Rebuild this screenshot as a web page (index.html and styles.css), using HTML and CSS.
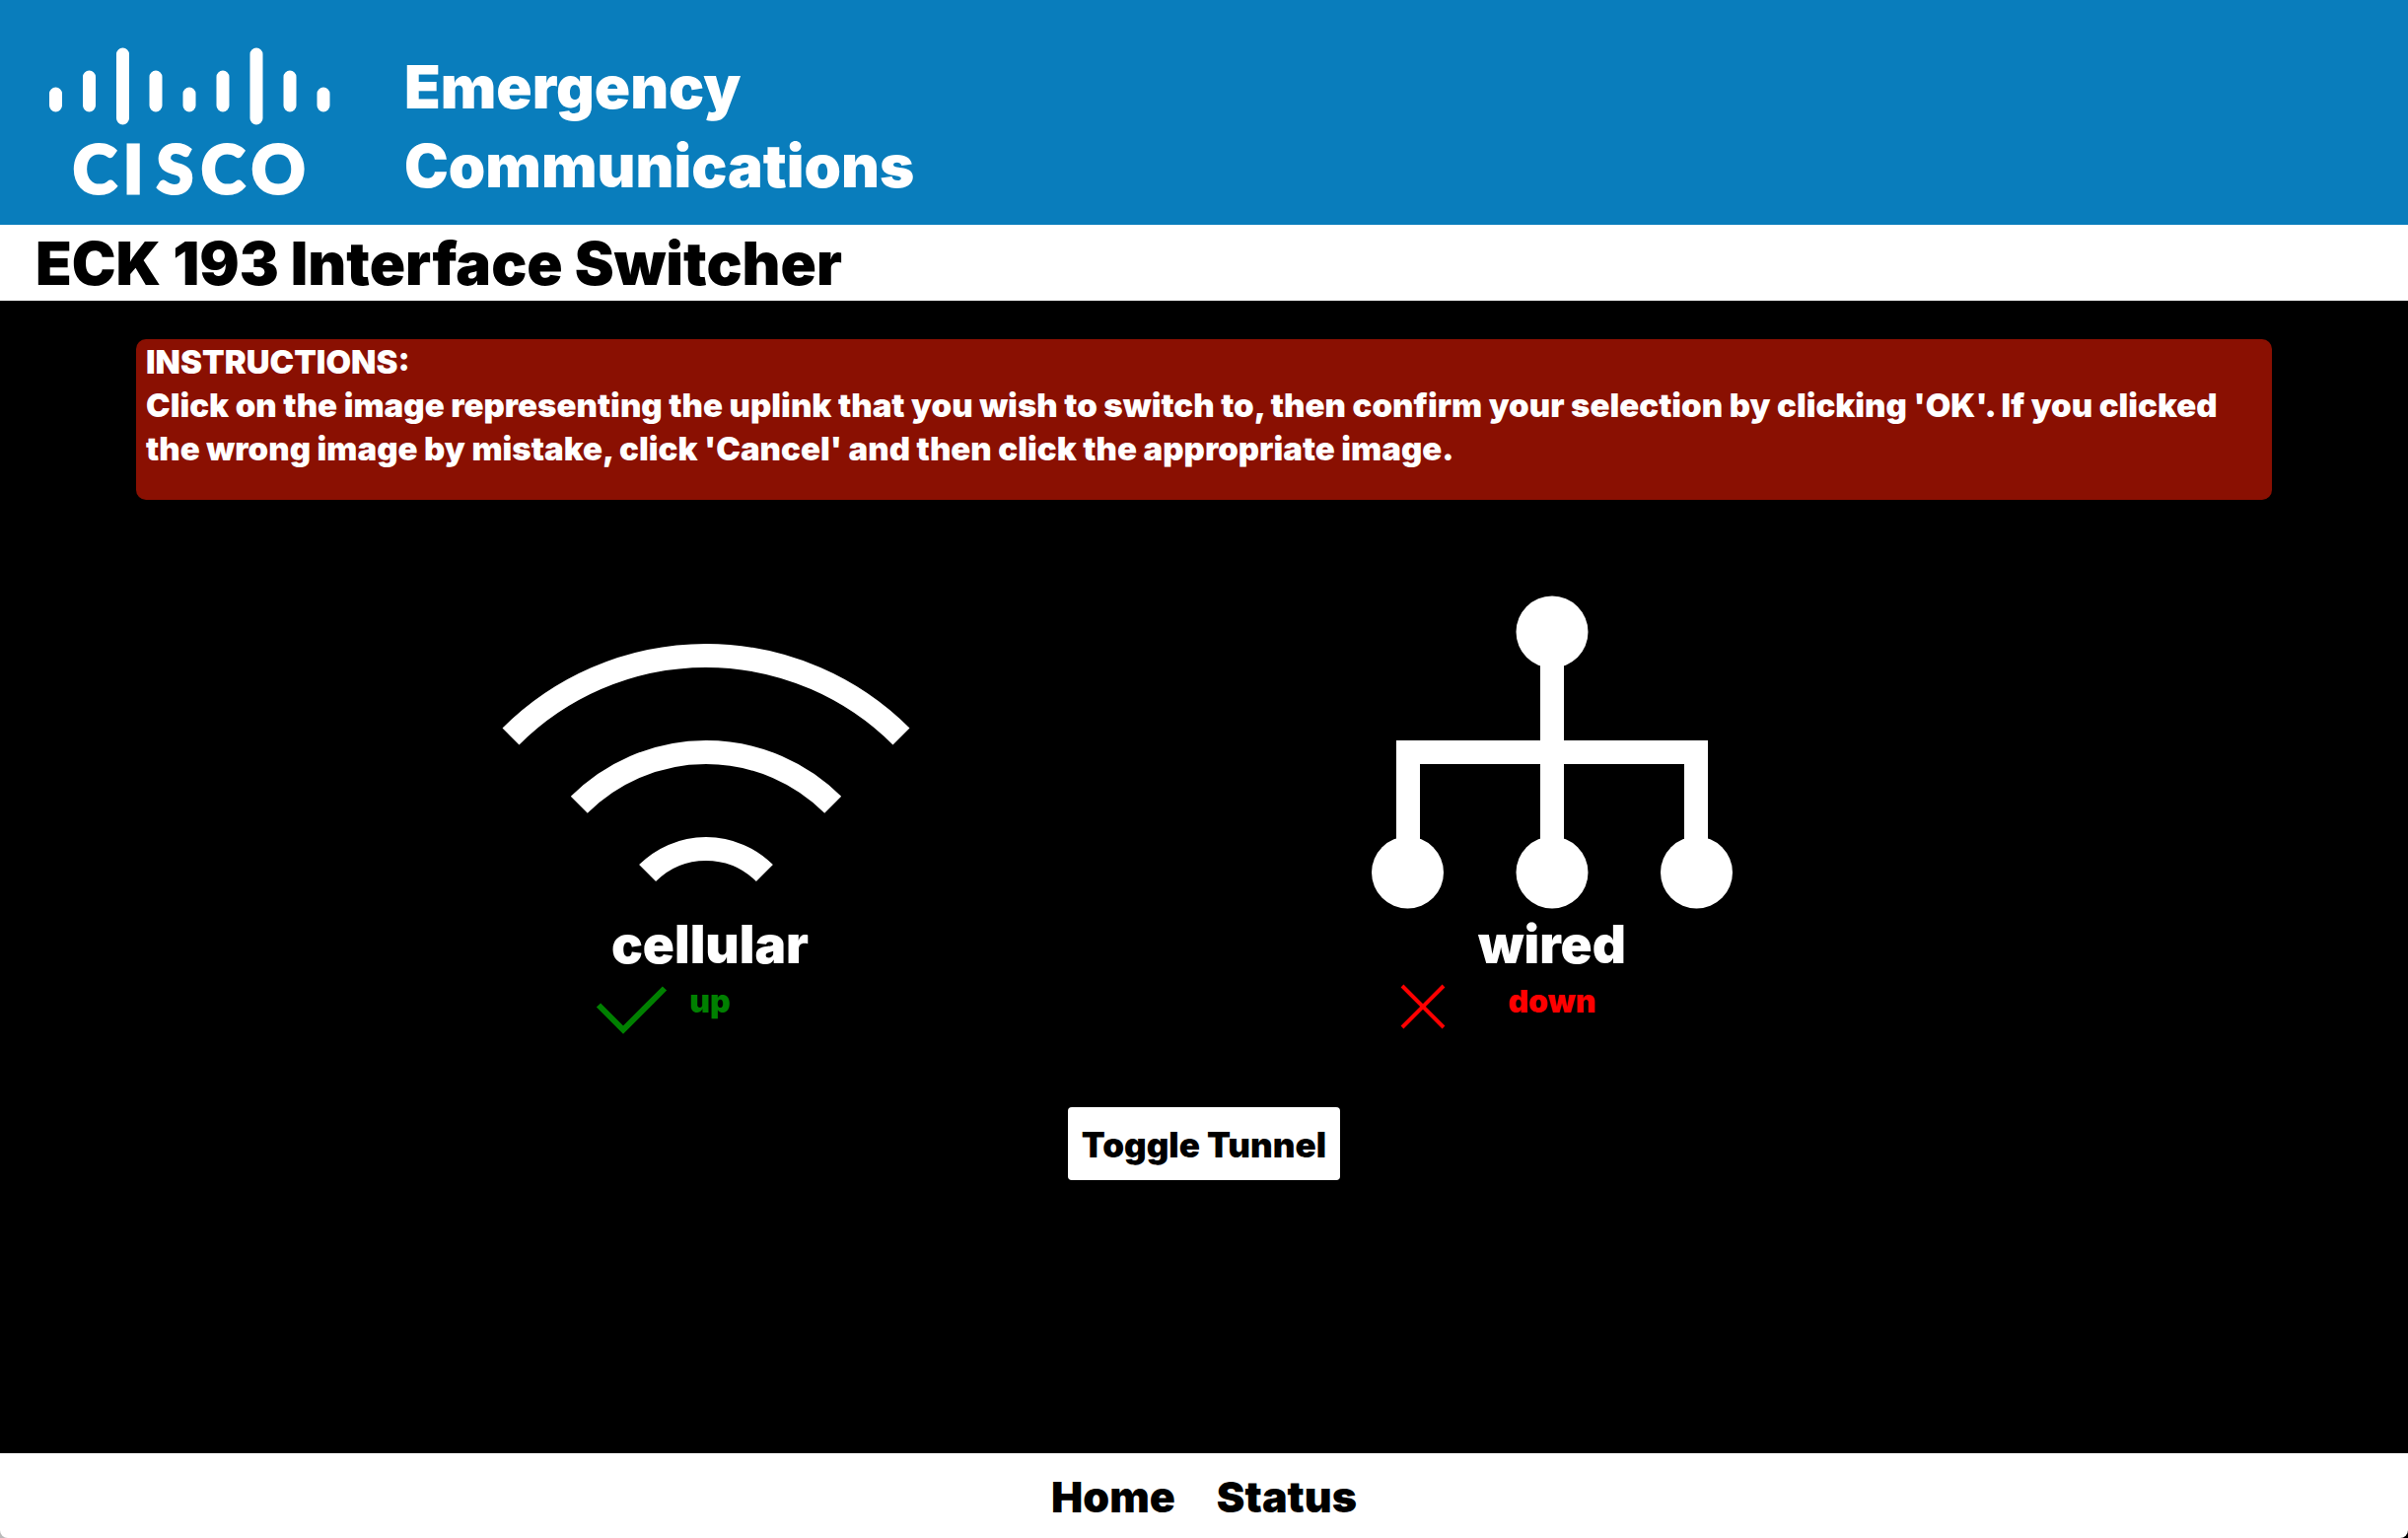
FILE: index.html
```html
<!DOCTYPE html>
<html lang="en">
<head>
<meta charset="utf-8">
<title>ECK 193 Interface Switcher</title>
<link rel="stylesheet" href="styles.css">
</head>
<body>
<header class="banner">
  <svg class="logo" viewBox="0 0 286 170" role="img" aria-label="Cisco">
    <g stroke="#fff" stroke-width="13" stroke-linecap="round">
      <path d="M6.500 47v12M40.500 30v29M74.500 7v65M108 30v29M142 47v12M176 30v29M210 7v65M244 30v29M278 47v12"/>
    </g>
    <text class="logo-word" x="24 75 109 154 205" y="148">CISCO</text>
  </svg>
  <p class="banner-title">Emergency<br>Communications</p>
</header>
<h1 class="page-title">ECK 193 Interface Switcher</h1>
<main class="content">
  <section class="instructions">
    <h2 class="instructions-title">INSTRUCTIONS:</h2>
    <p class="instructions-text">Click on the image representing the uplink that you wish to switch to, then confirm your selection by clicking 'OK'. If you clicked the wrong image by mistake, click 'Cancel' and then click the appropriate image.</p>
  </section>
  <div class="uplinks">
    <button class="uplink uplink-cellular" type="button">
      <svg class="uplink-icon" viewBox="4 0 414 318" aria-hidden="true">
        <g fill="none" stroke="#fff" stroke-width="24">
          <path d="M9 143A280 280 0 0 1 405 143"/>
          <path d="M78.300 212.300A182 182 0 0 1 335.700 212.300"/>
          <path d="M147.600 281.600A84 84 0 0 1 266.400 281.600"/>
        </g>
      </svg>
      <span class="uplink-name">cellular</span>
      <span class="uplink-status up">
        <svg class="status-icon" viewBox="0 0 110 48" aria-hidden="true"><path d="M30 20.500l25 25L97 3.500" fill="none" stroke="currentColor" stroke-width="6"/></svg>
        <span>up</span>
      </span>
    </button>
    <button class="uplink uplink-wired" type="button">
      <svg class="uplink-icon" viewBox="0 0 414 318" aria-hidden="true">
        <g fill="#fff">
          <circle cx="207" cy="37" r="36.500"/>
          <circle cx="60.500" cy="281" r="36.500"/>
          <circle cx="207" cy="281" r="36.500"/>
          <circle cx="353.500" cy="281" r="36.500"/>
          <path d="M195 37h24v110h146v134h-24V171H219v110h-24V171H73v110H49V147h146z"/>
        </g>
      </svg>
      <span class="uplink-name">wired</span>
      <span class="uplink-status down">
        <svg class="status-icon" viewBox="0 0 110 48" aria-hidden="true"><path d="M15 1l42 42M57 1L15 43" fill="none" stroke="currentColor" stroke-width="4"/></svg>
        <span>down</span>
      </span>
    </button>
  </div>
  <button class="toggle" type="button">Toggle Tunnel</button>
</main>
<footer class="footer">
  <nav class="footer-nav">
    <a href="#home">Home</a>
    <a href="#status">Status</a>
  </nav>
</footer>
</body>
</html>
```
FILE: styles.css
```css
* {
  box-sizing: border-box;
}

html {
  background: linear-gradient(to right, #bbb 50%, #000 50%);
}

body {
  display: flex;
  flex-direction: column;
  min-height: 100vh;
  margin: 0;
  color: #000;
  font-family: Inter, sans-serif;
  font-size: 32px;
  font-weight: 900;
}

h1, h2, p {
  margin: 0;
  font-weight: inherit;
}

button {
  border: 0;
  color: inherit;
  font: inherit;
  cursor: pointer;
}

svg {
  flex: none;
  overflow: visible;
}

.banner {
  display: flex;
  align-items: flex-start;
  gap: 74px;
  padding: 48px 50px 10px;
  background: #097dbc;
  color: #fff;
}

.logo {
  width: 286px;
  height: 170px;
}

.logo-word {
  fill: #fff;
  stroke: #fff;
  stroke-width: 3px;
  font-family: Lato, sans-serif;
  font-size: 67px;
  font-weight: 900;
}

.banner-title {
  font-size: 60px;
  line-height: 80px;
}

.page-title {
  padding: 3px 36px 2px;
  background: #fff;
  font-size: 60px;
  line-height: 72px;
}

.content {
  display: flex;
  flex: 1;
  flex-direction: column;
  align-items: center;
  padding-top: 39px;
  background: #000;
  color: #fff;
}

.instructions {
  align-self: stretch;
  margin: 0 138px;
  padding: 1px 10px 30px;
  border-radius: 10px;
  background: #8a1002;
}

.instructions-title,
.instructions-text {
  font-size: 33px;
  line-height: 44px;
}

.uplinks {
  display: grid;
  grid-template-columns: 293fr 854fr 854fr 441fr;
  align-self: stretch;
  margin-top: 97px;
}

.uplink {
  display: flex;
  flex-direction: column;
  align-items: center;
  padding: 0;
  background: none;
}

.uplink-cellular {
  grid-column: 2;
}

.uplink-wired {
  grid-column: 3;
}

.uplink-icon {
  width: 414px;
  height: 318px;
}

.uplink-name {
  margin-top: 2px;
  font-size: 53px;
  line-height: 68px;
}

.uplink-status {
  display: grid;
  grid-template-columns: 1fr auto 1fr;
  gap: 12px;
  width: 414px;
  margin-top: 2px;
  line-height: 44px;
}

.status-icon {
  justify-self: end;
  width: 110px;
  height: 48px;
  margin-top: 5px;
}

.up {
  color: #008000;
}

.down {
  color: #f00;
}

.toggle {
  margin-top: 76px;
  padding: 16px 14px 14px;
  border-radius: 4px;
  background: #fff;
  color: #000;
  font-size: 35px;
  line-height: 44px;
}

.footer {
  padding: 15px 14px 13px;
  border-radius: 0 0 8px 8px;
  background: #fff;
}

.footer-nav {
  display: flex;
  justify-content: center;
  gap: 42px;
  font-size: 43px;
  line-height: 58px;
}

.footer-nav a {
  color: inherit;
  text-decoration: none;
}
```
